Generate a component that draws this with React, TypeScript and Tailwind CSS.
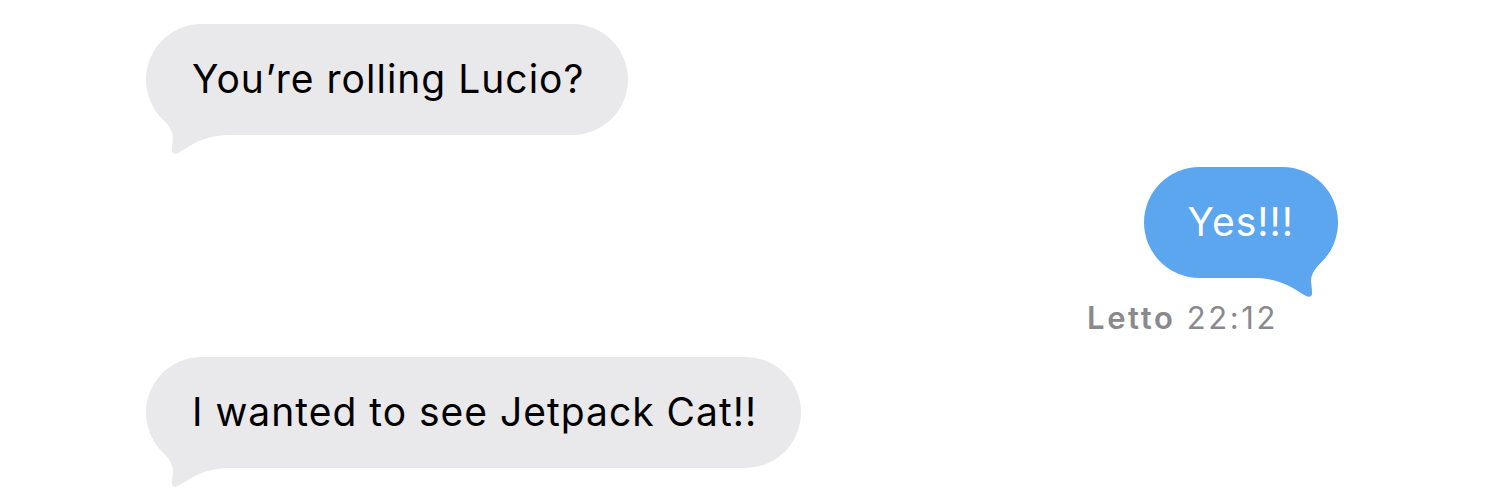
import React from 'react';

const font = { fontFamily: 'Inter, "Liberation Sans", sans-serif' };

const Tail: React.FC<{ color: string; flip?: boolean }> = ({ color, flip }) => (
  <svg
    className={`absolute top-[76px] h-[60px] w-[90px] ${flip ? 'right-0 -scale-x-100' : 'left-0'}`}
    viewBox="0 0 90 60"
  >
    <path
      d="M4,0 L8,8 C14,18 27,26 27,38 L26,48 C25,53 28,55 32,53 C43,47 53,37 80,35 L80,0 Z"
      fill={color}
    />
  </svg>
);

const Received: React.FC<{ text: string }> = ({ text }) => (
  <div className="flex">
    <div className="relative">
      <Tail color="#e9e9eb" />
      <div className="relative flex h-[111px] items-center rounded-full bg-[#e9e9eb] pl-[46px] pr-[44px] text-[39px] tracking-[1px] text-black">
        {text}
      </div>
    </div>
  </div>
);

export default function App() {
  return (
    <div className="flex h-[499px] w-full flex-col bg-white pl-[146px] pr-[162px] pt-[24px]" style={font}>
      <Received text="You’re rolling Lucio?" />

      <div className="mt-[32px] flex flex-col items-end">
        <div className="relative">
          <Tail color="#5ba6ee" flip />
          <div className="relative flex h-[111px] items-center rounded-full bg-[#5ba6ee] pl-[44px] pr-[44px] text-[39px] tracking-[1px] text-white">
            Yes!!!
          </div>
        </div>
        <div className="mr-[60px] mt-[23px] text-[31px] leading-[34px] tracking-[2.6px] text-[#8a8a8e]">
          <span className="font-semibold">Letto</span> 22:12
        </div>
      </div>

      <div className="mt-[22px]">
        <Received text="I wanted to see Jetpack Cat!!" />
      </div>
    </div>
  );
}
